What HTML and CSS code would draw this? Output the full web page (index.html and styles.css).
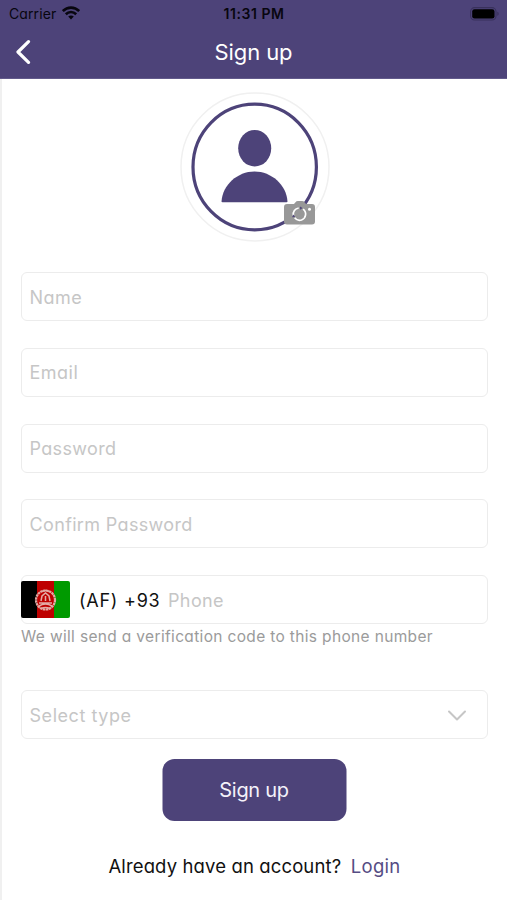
FILE: index.html
```html
<!DOCTYPE html>
<html lang="en">
<head>
<meta charset="utf-8">
<title>Sign up</title>
<link rel="stylesheet" href="styles.css">
</head>
<body>
<div class="screen">
  <header class="header">
    <div class="status">
      <div class="carrier"><span>Carrier</span>
        <svg width="18" height="14" viewBox="0 0 18 14" fill="none" stroke="#08060f" stroke-width="2.6"><path d="M.8 5.1C5.5.4 12.5.4 17.2 5.1M3.8 8.2c3-2.900 7.400-2.900 10.400 0"/><path d="M6.200 10.600c1.600-1.500 4-1.500 5.600 0L9 13.600z" fill="#08060f" stroke="none"/></svg>
      </div>
      <span class="time">11:31 PM</span>
      <svg class="battery" width="29" height="14" viewBox="0 0 29 14"><rect x=".6" y=".6" width="25.4" height="12.4" rx="4" fill="none" stroke="#39315c" stroke-width="1.1"/><rect x="2.2" y="2.2" width="22.3" height="9.3" rx="2.3"/><path d="M27.3 4.8c1.8.6 1.8 3.4 0 4z" fill="#39315c"/></svg>
    </div>
    <div class="nav">
      <svg class="back" width="16" height="26" viewBox="0 0 16 26" fill="none" stroke="#fff" stroke-width="3.2" stroke-linecap="round" stroke-linejoin="round"><path d="M12.500 2.600 2 13l10.500 10.400"/></svg>
      <span class="title">Sign up</span>
    </div>
  </header>
  <main class="content">
    <div class="avatar">
      <svg width="150" height="150" viewBox="0 0 150 150"><circle cx="75" cy="75" r="74" fill="#fff" stroke="#f0f0f0" stroke-width="1.5"/><ellipse cx="74.7" cy="75" rx="61.7" ry="62.8" fill="none" stroke="#4d4379" stroke-width="3.2"/><ellipse cx="74.700" cy="56.2" rx="16.5" ry="18.3" fill="#4d4379"/><path d="M41.500 109.500C42.500 93 57.500 79.500 74.500 79.500s32 13.500 33 30q0 .8-1 .8h-64q-1 0-1-.8z" fill="#4d4379"/></svg>
      <svg class="camera" width="31" height="24" viewBox="0 0 31 24"><path d="M3 3h7l1.500-1.700q.8-1.300 2.500-1.300h4q1.700 0 2.500 1.300L22 3h6q3 0 3 3v14.500q0 3-3 3H3q-3 0-3-3V6q0-3 3-3z" fill="#989898"/><path d="M19 8.100a6.200 6.200 0 0 1-1.500 10.900 6.200 6.200 0 0 1-6.800-2.200M9.400 14.500a6.200 6.200 0 0 1 5.300-7.500" fill="none" stroke="#fff" stroke-width="1.700"/><path d="m16 5.500 2.500 1.500-2.300 1.700zM9.200 13.500l2 2.500-3 .2z" fill="#4d4379"/><circle cx="25.500" cy="8.200" r="1.500" fill="#fff"/></svg>
    </div>
    <form class="form">
      <div class="field"><span class="name">Name</span></div>
      <div class="field"><span class="email">Email</span></div>
      <div class="field"><span class="password">Password</span></div>
      <div class="field"><span class="confirm">Confirm Password</span></div>
      <div class="field phone-field">
        <svg class="flag" width="49" height="37" viewBox="0 0 49 37"><path d="M2 0h14v37H2q-2 0-2-2V2q0-2 2-2z"/><path d="M16 0h17v37H16z" fill="#be0000"/><path d="M33 0h14q2 0 2 2v33q0 2-2 2H33z" fill="#009a00"/><g fill="none" stroke="#e3aaa6"><circle cx="24.500" cy="19" r="9.500" stroke-width="2.200" stroke-dasharray="2.500 .5"/><path d="M18 22h13M20 20l1-5 3.500-3 3.500 3 1 5M18 25q6.500-4 13 0M24.500 15v5M20 27.500q4.500-2 9 0M21 10.500q3.500-2 7 0" stroke-width="1.500"/></g></svg>
        <span class="code">(AF) +93</span><span class="phone">Phone</span>
      </div>
    </form>
    <p class="hint">We will send a verification code to this phone number</p>
    <div class="field select"><span class="type">Select type</span>
      <svg width="20" height="12" viewBox="0 0 20 12" fill="none" stroke="#c6c6c6" stroke-width="2" stroke-linecap="round" stroke-linejoin="round"><path d="m2 1.500 8 8 8-8"/></svg>
    </div>
    <button class="submit" type="button"><span>Sign up</span></button>
    <p class="footer"><span class="already">Already have an account?</span><a class="login">Login</a></p>
  </main>
</div>
</body>
</html>
```
FILE: styles.css
```css
* { box-sizing: border-box; }
body { margin: 0; background: #fff; font-family: Inter, "Liberation Sans", sans-serif; font-feature-settings: "cv11"; }
.screen { width: 507px; height: 900px; overflow: hidden; background: #fff; }
span, a { white-space: nowrap; }
.header { height: 79px; background: #4d4379; border-bottom: 1px solid #625a8b; }
.status { height: 28px; padding: 0 8px 0 9px; display: grid; grid-template-columns: 1fr auto 1fr; align-items: center; color: #08060f; }
.carrier { display: flex; align-items: center; gap: 6px; font-size: 14px; letter-spacing: 0.1px; line-height: 16px; }
.carrier svg { margin-top: -3px; }
.time { font-size: 14px; font-weight: 600; letter-spacing: 0.55px; line-height: 16px; }
.battery { justify-self: end; margin-top: -1px; }
.nav { height: 48px; padding: 0 16px; display: grid; grid-template-columns: 1fr auto 1fr; align-items: center; color: #fff; }
.title { font-size: 22px; letter-spacing: -0.1px; }
.content { height: 821px; padding: 13px 19px 0; border-left: 2px solid #f0f0f0; display: flex; flex-direction: column; align-items: center; }
.avatar { position: relative; width: 150px; height: 150px; }
.avatar svg { display: block; }
.avatar .camera { position: absolute; left: 104px; top: 109px; }
.form { width: 100%; margin-top: 30px; display: flex; flex-direction: column; gap: 26.75px; }
.field { width: 100%; height: 49px; border: 1px solid #ececec; border-radius: 6px; padding: 2px 8px 0; display: flex; align-items: center; font-size: 18px; line-height: 24px; color: #c6c6c6; }
.name, .email { letter-spacing: 0.5px; margin-left: -0.5px; }
.password, .confirm { letter-spacing: 0.35px; margin-left: -0.5px; }
.phone-field { padding: 2px 0 0; }
.flag { margin: -2px 0 0 -1px; }
.code { margin-left: 9px; color: #111; letter-spacing: 0.75px; }
.phone { margin-left: 7.500px; letter-spacing: 0.4px; }
.hint { margin: 4px 0 0; align-self: flex-start; font-size: 15.500px; line-height: 18px; letter-spacing: 0.34px; color: #9b9b9b; white-space: nowrap; }
.select { margin-top: 44px; justify-content: space-between; padding-right: 20px; flex: none; }
.type { letter-spacing: 0.55px; margin-left: -0.5px; }
.submit { width: 184px; height: 62px; margin: 20px 0 0; padding: 0; border: 0; border-radius: 12px; background: #4d4379; color: #f4f2fa; font: inherit; font-size: 20px; letter-spacing: -0.3px; font-feature-settings: inherit; transform: translateX(-0.5px); }
.footer { margin: 33px 0 0; display: flex; gap: 9.500px; font-size: 18.500px; line-height: 24px; letter-spacing: 0.13px; color: #111; }
.login { color: #554c84; letter-spacing: 0.3px; }
```
